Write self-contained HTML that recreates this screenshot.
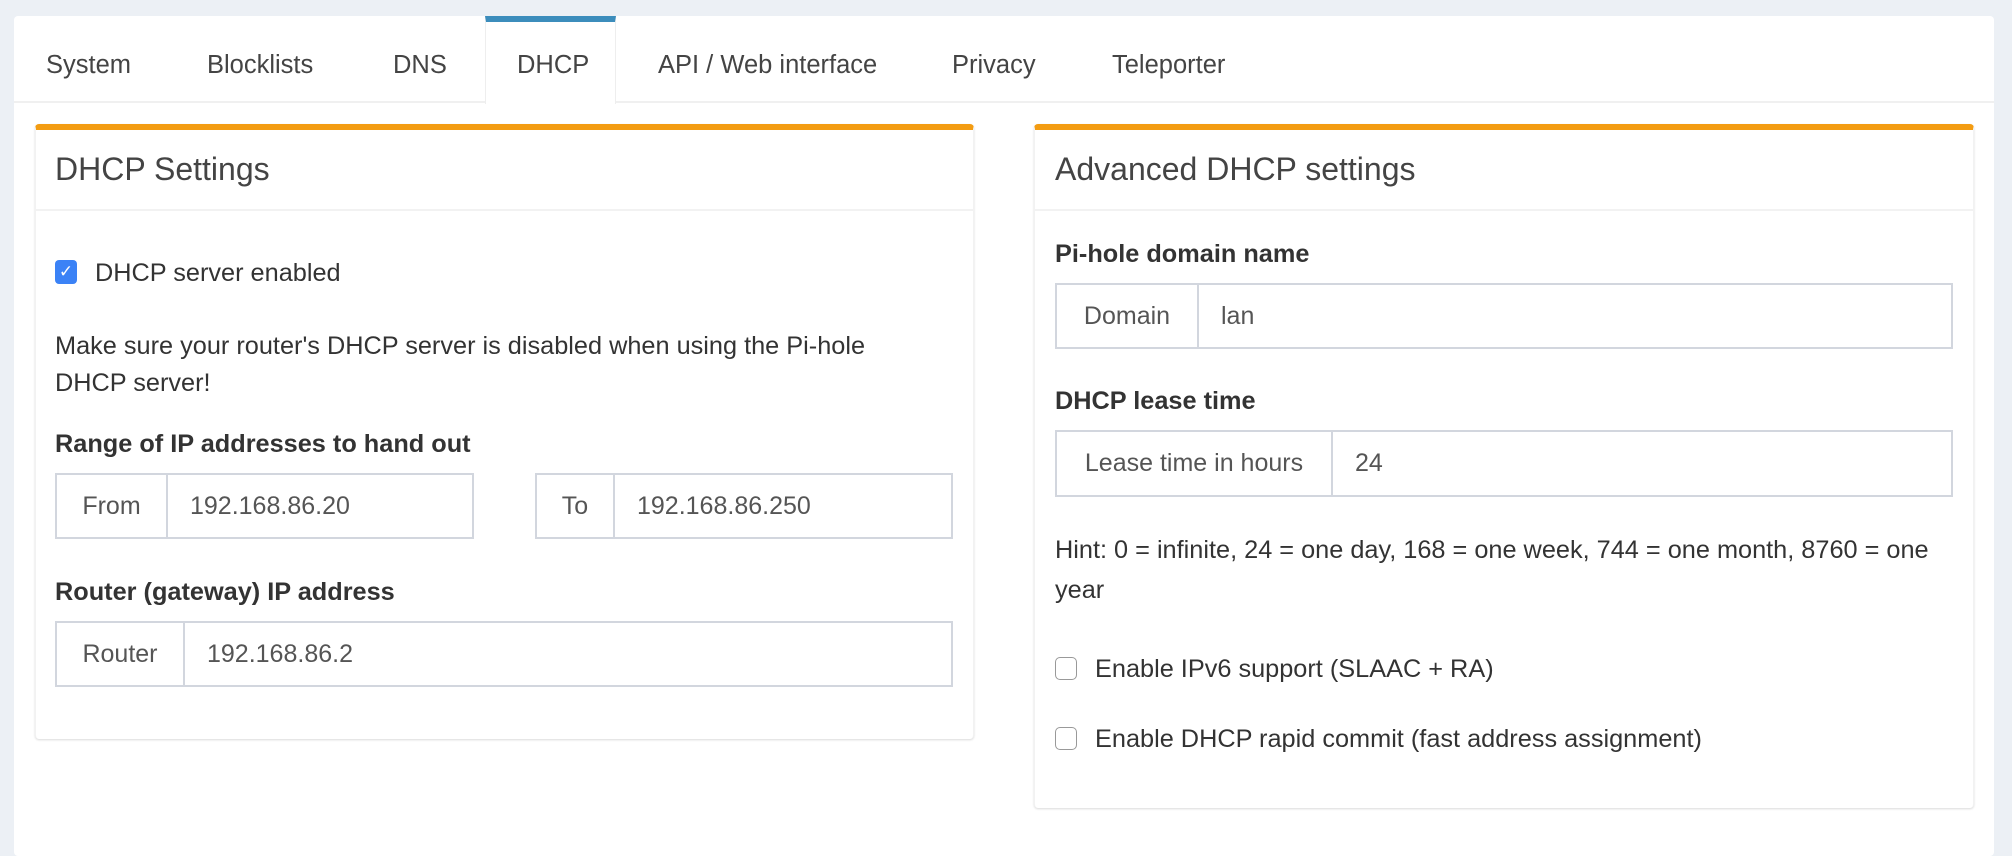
<!DOCTYPE html>
<html><head><meta charset="utf-8"><style>
*{box-sizing:border-box;margin:0;padding:0}
body{width:2012px;height:844px;background:#ecf0f5;font-family:"Liberation Sans",sans-serif;color:#333;position:relative;overflow:hidden}
.abs{position:absolute}
.card{left:14px;top:16px;width:1980px;height:840px;background:#fff;border-radius:4px}
.tabline{left:14px;top:101px;width:1980px;height:2px;background:#f0f0f0}
.tab{top:49px;font-size:25.5px;color:#444;line-height:32px}
.active{left:485px;top:16px;width:131px;height:88px;background:#fff;border-left:1px solid #eee;border-right:1px solid #eee;border-top:6px solid #3c8dbc}
.box{background:#fff;border-radius:4px;box-shadow:0 1px 2px rgba(0,0,0,.15);border-top:6px solid #f39c12;border-left:1px solid #f2f2f2;border-right:1px solid #f2f2f2}
.hdrline{height:2px;background:#f2f2f2}
.title{font-size:32px;color:#444;line-height:36px}
.txt{font-size:25.3px;line-height:30px;color:#333;white-space:nowrap}
.b{font-weight:bold}
.grp{border:2px solid #d2d6de;display:flex;background:#fff}
.grp .ad{border-right:2px solid #d2d6de;display:flex;align-items:center;justify-content:center;font-size:25px;color:#555}
.grp .in{display:flex;align-items:center;padding-left:22px;font-size:25px;color:#555}
.cb{width:22px;height:23px;border:1.5px solid #999;border-radius:5px;background:#fff}
.cbon{width:22px;height:24px;border-radius:4px;background:#3b82f6;color:#fff;font-size:17px;line-height:24px;text-align:center}
</style></head><body>
<div class="abs card"></div>
<div class="abs tabline"></div>
<div class="abs active"></div>
<div class="abs tab" style="left:46px">System</div>
<div class="abs tab" style="left:207px">Blocklists</div>
<div class="abs tab" style="left:393px">DNS</div>
<div class="abs tab" style="left:517px">DHCP</div>
<div class="abs tab" style="left:658px">API / Web interface</div>
<div class="abs tab" style="left:952px">Privacy</div>
<div class="abs tab" style="left:1112px">Teleporter</div>

<div class="abs box" style="left:35px;top:124px;width:939px;height:615px"></div>
<div class="abs hdrline" style="left:36px;top:209px;width:937px"></div>
<div class="abs title" style="left:55px;top:151px">DHCP Settings</div>
<div class="abs cbon" style="left:55px;top:260px">✓</div>
<div class="abs txt" style="left:95px;top:258px">DHCP server enabled</div>
<div class="abs txt" style="left:55px;top:331px">Make sure your router's DHCP server is disabled when using the Pi-hole</div>
<div class="abs txt" style="left:55px;top:368px">DHCP server!</div>
<div class="abs txt b" style="left:55px;top:429px">Range of IP addresses to hand out</div>
<div class="abs grp" style="left:55px;top:473px;width:419px;height:66px"><div class="ad" style="width:111px">From</div><div class="in">192.168.86.20</div></div>
<div class="abs grp" style="left:535px;top:473px;width:418px;height:66px"><div class="ad" style="width:78px">To</div><div class="in">192.168.86.250</div></div>
<div class="abs txt b" style="left:55px;top:577px">Router (gateway) IP address</div>
<div class="abs grp" style="left:55px;top:621px;width:898px;height:66px"><div class="ad" style="width:128px">Router</div><div class="in">192.168.86.2</div></div>

<div class="abs box" style="left:1034px;top:124px;width:940px;height:684px"></div>
<div class="abs hdrline" style="left:1035px;top:209px;width:938px"></div>
<div class="abs title" style="left:1055px;top:151px">Advanced DHCP settings</div>
<div class="abs txt b" style="left:1055px;top:239px">Pi-hole domain name</div>
<div class="abs grp" style="left:1055px;top:283px;width:898px;height:66px"><div class="ad" style="width:142px">Domain</div><div class="in">lan</div></div>
<div class="abs txt b" style="left:1055px;top:386px">DHCP lease time</div>
<div class="abs grp" style="left:1055px;top:430px;width:898px;height:67px"><div class="ad" style="width:276px">Lease time in hours</div><div class="in">24</div></div>
<div class="abs txt" style="left:1055px;top:535px">Hint: 0 = infinite, 24 = one day, 168 = one week, 744 = one month, 8760 = one</div>
<div class="abs txt" style="left:1055px;top:575px">year</div>
<div class="abs cb" style="left:1055px;top:657px"></div>
<div class="abs txt" style="left:1095px;top:654px">Enable IPv6 support (SLAAC + RA)</div>
<div class="abs cb" style="left:1055px;top:727px"></div>
<div class="abs txt" style="left:1095px;top:724px">Enable DHCP rapid commit (fast address assignment)</div>
</body></html>
